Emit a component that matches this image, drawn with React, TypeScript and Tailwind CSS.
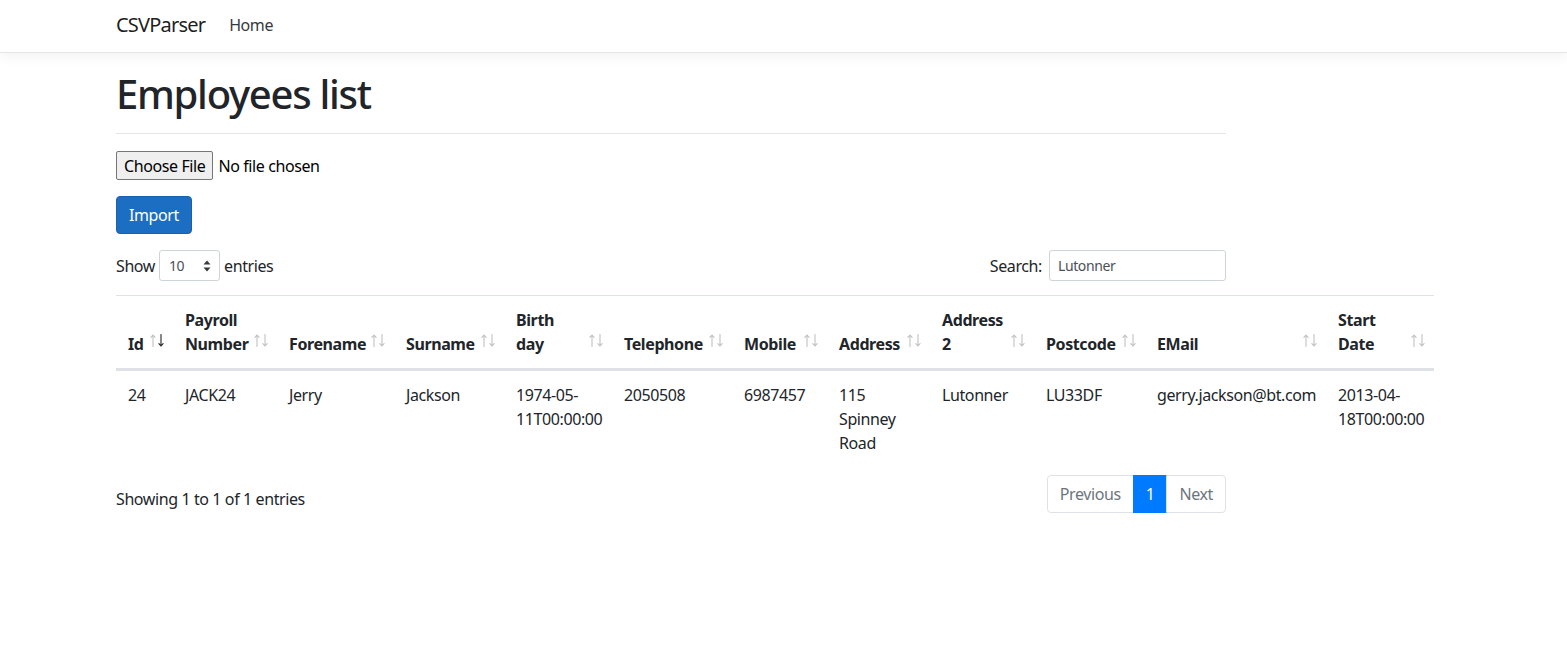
import React from "react";

const FONT = { fontFamily: '"Segoe UI", "Noto Sans", "Liberation Sans", sans-serif' };

function SortIcon({ active }: { active?: "asc" | "desc" }) {
  const upCol = active === "asc" ? "#212529" : "#c0c1c2";
  const downCol = active === "desc" ? "#212529" : "#c0c1c2";
  return (
    <svg width="15" height="13" viewBox="0 0 15 13" className="absolute right-[8px] bottom-[21px]">
      <g fill="none" strokeWidth="1.1" strokeLinecap="round">
        <path d="M3 12.5V1 M0.9 3.3 L3 1 L5.1 3.3" stroke={upCol} />
        <path d="M11 0.5V12 M8.9 9.7 L11 12 L13.1 9.7" stroke={downCol} />
      </g>
    </svg>
  );
}

type Col = { label: React.ReactNode; w: number; active?: "asc" | "desc" };

const cols: Col[] = [
  { label: "Id", w: 57, active: "desc" },
  { label: (<>Payroll<br />Number</>), w: 104 },
  { label: "Forename", w: 117 },
  { label: "Surname", w: 110 },
  { label: (<>Birth<br />day</>), w: 108 },
  { label: "Telephone", w: 120 },
  { label: "Mobile", w: 95 },
  { label: "Address", w: 103 },
  { label: (<>Address<br />2</>), w: 104 },
  { label: "Postcode", w: 111 },
  { label: "EMail", w: 181 },
  { label: (<>Start<br />Date</>), w: 108 },
];

const row: React.ReactNode[] = [
  "24",
  "JACK24",
  "Jerry",
  "Jackson",
  (<>1974-05-<br />11T00:00:00</>),
  "2050508",
  "6987457",
  (<>115<br />Spinney<br />Road</>),
  "Lutonner",
  "LU33DF",
  "gerry.jackson@bt.com",
  (<>2013-04-<br />18T00:00:00</>),
];

export default function App() {
  return (
    <div className="min-h-[660px] bg-white text-[#212529] text-[16px] leading-[24px] tracking-[-0.025em]" style={FONT}>
      <nav className="h-[53px] bg-white border-b border-[#e5e5e5] shadow-[0_4px_12px_rgba(0,0,0,0.05)] flex items-center pl-[116px]">
        <span className="text-[20px] leading-[30px] text-[rgba(0,0,0,0.9)] mr-[16px] -mt-[2px] tracking-[-0.04em]">CSVParser</span>
        <span className="px-[8px] text-[#343a40] -mt-[2px]">Home</span>
      </nav>

      <main className="ml-[116px] w-[1110px] pt-[17px]">
        <h1 className="text-[40px] leading-[48px] font-medium mb-[8px] tracking-[-0.032em]">Employees list</h1>
        <div className="h-px bg-[#e5e5e5] mt-[15px]" />

        <div className="mt-[17px] flex items-center h-[29px]">
          <span className="h-[29px] px-[7px] flex items-center border border-[#767676] rounded-[2px] bg-[#efefef] text-[16px] text-black">Choose File</span>
          <span className="ml-[5px] text-black">No file chosen</span>
        </div>

        <button className="mt-[16px] h-[38px] px-[12px] rounded-[4px] bg-[#1b6ec2] border border-[#1861ac] text-white text-[16px] leading-[24px]">Import</button>

        <div className="mt-[16px] flex items-center justify-between h-[31px]">
          <div className="flex items-center">
            <span>Show</span>
            <span className="relative ml-[4px] mr-[4px] w-[61px] h-[31px] border border-[#ced4da] rounded-[3px] flex items-center pl-[9px] text-[14px] text-[#495057]">
              10
              <svg width="8" height="12" viewBox="0 0 8 12" className="absolute right-[8px] top-[9px]">
                <path d="M4 0.5 L7.5 4.5 H0.5 Z M4 11.5 L7.5 7.5 H0.5 Z" fill="#343a40" />
              </svg>
            </span>
            <span>entries</span>
          </div>
          <div className="flex items-center">
            <span>Search:</span>
            <span className="ml-[7px] w-[177px] h-[31px] border border-[#ced4da] rounded-[3px] flex items-center pl-[8px] text-[14px] text-[#495057]">Lutonner</span>
          </div>
        </div>

        <table className="mt-[14px] mb-[6px] table-fixed border-separate border-spacing-0 w-[1318px]">
          <thead>
            <tr>
              {cols.map((c, i) => (
                <th
                  key={i}
                  style={{ width: c.w }}
                  className="relative text-left align-bottom font-bold whitespace-nowrap border-t border-[#dee2e6] border-b-2 border-b-[#dee2e6] pl-[12px] pr-[30px] py-[12px]"
                >
                  {c.label}
                  <SortIcon active={c.active} />
                </th>
              ))}
            </tr>
          </thead>
          <tbody>
            <tr>
              {row.map((v, i) => (
                <td key={i} className="align-top whitespace-nowrap border-t border-[#dee2e6] p-[12px]">
                  {v}
                </td>
              ))}
            </tr>
          </tbody>
        </table>

        <div className="flex items-start justify-between">
          <div className="pt-[14px]">Showing 1 to 1 of 1 entries</div>
          <div className="mt-[2px] flex h-[38px] text-[16px]">
            <span className="px-[12px] flex items-center border border-[#dee2e6] rounded-l-[4px] text-[#6c757d]">Previous</span>
            <span className="px-[12px] flex items-center bg-[#007bff] border border-[#007bff] text-white -ml-px">1</span>
            <span className="px-[12px] flex items-center border border-[#dee2e6] rounded-r-[4px] text-[#6c757d] -ml-px">Next</span>
          </div>
        </div>
      </main>
    </div>
  );
}
